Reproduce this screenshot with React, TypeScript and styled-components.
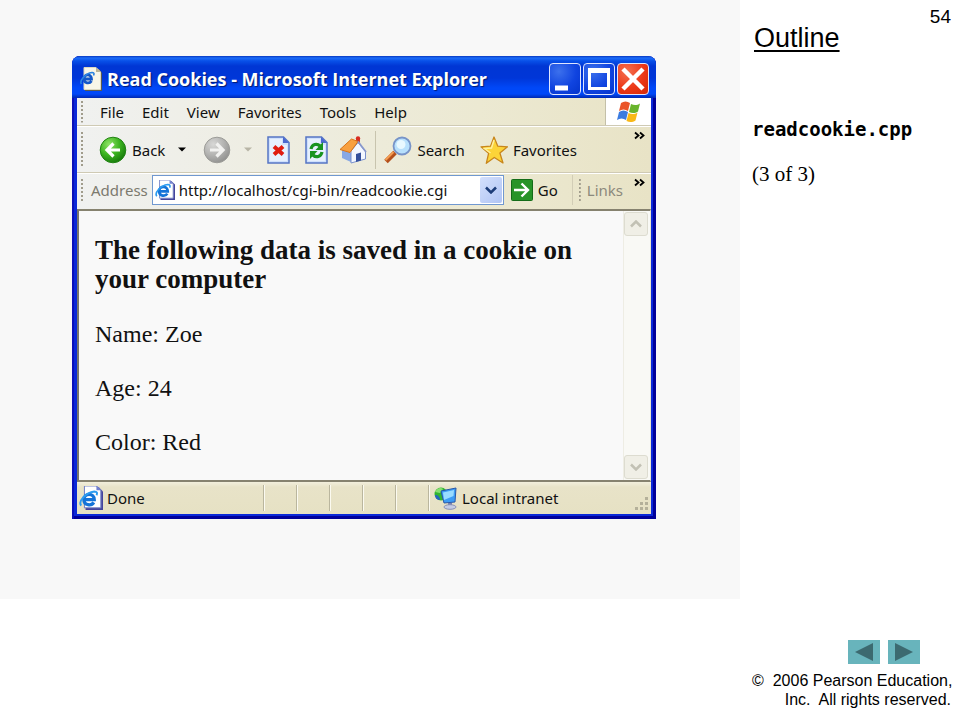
import React, { useId, useState } from "react";
import styled, { createGlobalStyle, css } from "styled-components";

const GlobalStyle = createGlobalStyle`
  * { box-sizing: border-box; }
  body { margin: 0; background: #fff; color: #000; }
  button { border: 0; padding: 0; margin: 0; background: none; font: inherit; color: inherit; }
  h1, h2, h3, p { margin: 0; }
  svg { display: block; flex: none; }
`;

const uiFont = `"Noto Sans", "Open Sans", sans-serif`;

const Page = styled.div`
  display: grid;
  grid-template-columns: minmax(0, 1fr) 220px;
  min-height: 100vh;
`;

const Slide = styled.main`
  align-self: start;
  padding: 56px 84px 80px 72px;
  background: #f8f8f8;
`;

const BrowserWindow = styled.section`
  display: flex;
  flex-direction: column;
  padding: 0 5px 5px;
  border-radius: 8px 8px 0 0;
  background: #0a28d8;
  box-shadow: inset 2px 0 #0a10b8, inset -3px -3px #00009a;
  color: #111;
  font: 15px/20px ${uiFont};
  overflow: hidden;
`;

const TitleBar = styled.header`
  display: flex;
  align-items: center;
  gap: 5px;
  height: 42px;
  margin: 0 -5px;
  padding: 4px 7px 0 8px;
  background: linear-gradient(#0838c0 0, #1c6cf8 2px, #0850e8 5px, #0036d4 10px, #0036d8 22px, #0048f8 32px, #0048f8 38px, #0028b0 42px);
`;

const WindowTitle = styled.h1`
  flex: 1;
  min-width: 0;
  color: #fff;
  font: bold 18px/24px "Open Sans", "Noto Sans", sans-serif;
  text-shadow: 1px 1px 1px #001a70;
  white-space: nowrap;
`;

const WindowControls = styled.div`
  display: flex;
  gap: 2px;
`;

const ControlButton = styled.button<{ $danger?: boolean }>`
  display: grid;
  place-items: center;
  width: 32px;
  height: 32px;
  border: 1px solid #dfe6ff;
  border-radius: 4px;
  background: ${(p) =>
    p.$danger
      ? "radial-gradient(circle at 30% 25%, #f47050, #ec3818 55%, #d42808)"
      : "radial-gradient(circle at 30% 25%, #3c70ec, #1044e0 55%, #0434cc)"};
`;

const bar = css`
  display: flex;
  align-items: center;
  background: linear-gradient(90deg, #f0f1f0, #ece9d2 70%, #e8e3c6);
`;

const MenuBar = styled.nav`
  ${bar}
  height: 28px;
  padding-left: 4px;
  border-bottom: 1px solid #cfcab4;
`;

const MenuList = styled.div`
  display: flex;
  flex: 1;
  gap: 18px;
  padding-left: 16px;
`;

const WindowsMark = styled.div`
  display: grid;
  place-items: center;
  align-self: stretch;
  width: 46px;
  border-left: 1px solid #c4c0a8;
  background: #fff;
`;

const ToolBar = styled.div`
  ${bar}
  height: 47px;
  padding: 0 6px 0 4px;
  border-top: 1px solid #fff;
  border-bottom: 1px solid #cfcab4;
`;

const AddressBar = styled.form`
  ${bar}
  height: 36px;
  padding: 0 6px 3px 4px;
  border-top: 1px solid #fff;
`;

const Grip = styled.span<{ $tall?: boolean }>`
  flex: none;
  width: 3px;
  height: ${(p) => (p.$tall ? 36 : 22)}px;
  background: repeating-linear-gradient(#a09c8c 0 2px, transparent 2px 4px);
  clip-path: inset(0 1px 0 0);
`;

const ToolButton = styled.button<{ $after?: number; $before?: number }>`
  display: flex;
  flex: none;
  align-items: center;
  gap: 5px;
  margin-left: ${(p) => p.$before ?? 0}px;
  margin-right: ${(p) => p.$after ?? 0}px;
  white-space: nowrap;
`;

const Separator = styled.span`
  width: 1px;
  height: 38px;
  margin: 0 8px;
  background: #c8c4ae;
`;

const More = styled.button`
  align-self: flex-start;
  flex: none;
  margin-left: auto;
  padding-top: 4px;
`;

const AddressLabel = styled.label`
  padding: 0 4px 0 7px;
  color: #7c7a6e;
`;

const AddressField = styled.div`
  display: flex;
  flex: 1;
  align-items: center;
  gap: 4px;
  min-width: 0;
  height: 30px;
  padding-left: 2px;
  border: 1px solid #7098d0;
  background: #fff;
`;

const AddressInput = styled.input`
  flex: 1;
  min-width: 0;
  padding: 0;
  border: 0;
  outline: 0;
  background: none;
  color: inherit;
  font: inherit;
`;

const DropButton = styled.button`
  display: grid;
  place-items: center;
  align-self: stretch;
  flex: none;
  width: 22px;
  margin: 1px;
  border-radius: 2px;
  background: linear-gradient(135deg, #d4e0fc, #b0c4f4);
`;

const LinksGroup = styled.div`
  display: flex;
  flex: none;
  align-items: center;
  gap: 5px;
  height: 30px;
  margin: 0 11px 0 14px;
  padding-left: 6px;
  border-left: 1px solid #d2cdb6;
  color: #8c897c;
`;

const Viewport = styled.div`
  display: flex;
  justify-content: space-between;
  min-height: 273px;
  border: 2px solid #86826f;
  border-left-color: #77756a;
  border-right: 1px solid #e8e4d0;
  background: #f9f9f9;
`;

const Document = styled.article`
  padding: 25px 16px 20px;
  font: 24px/28px "Liberation Serif", "Times New Roman", serif;
`;

const DocHeading = styled.h2`
  font-size: 27px;
  line-height: 29px;
`;

const DocLine = styled.p`
  margin-top: 26px;
`;

const ScrollBar = styled.div`
  display: flex;
  flex: none;
  flex-direction: column;
  justify-content: space-between;
  width: 27px;
  padding-right: 2px;
  border-left: 1px solid #eeede4;
  background: #f9f9f5;
`;

const ScrollButton = styled.button`
  display: grid;
  place-items: center;
  height: 24px;
  margin: 1px 0;
  border: 1px solid #dddcd0;
  border-radius: 3px;
  background: #f0efe6;
`;

const StatusBar = styled.footer`
  display: flex;
  align-items: center;
  height: 32px;
  background: linear-gradient(#f2efdc, #e8e3c8 5px, #e6e1c4);
`;

const StatusCell = styled.div<{ $grow?: boolean; $wide?: boolean }>`
  display: flex;
  flex: ${(p) => (p.$grow ? "1" : "none")};
  align-items: center;
  gap: ${(p) => (p.$grow ? 4 : 5)}px;
  width: ${(p) => (p.$wide ? 223 : 33)}px;
  height: 26px;
  padding-left: ${(p) => (p.$grow ? 2 : 5)}px;
  border-left: ${(p) => (p.$grow ? 0 : 1)}px solid #bab69e;
  box-shadow: ${(p) => (p.$grow ? "none" : "inset 1px 0 #fbfaf0")};
  white-space: nowrap;
`;

const SizeGrip = styled.span`
  align-self: flex-end;
  margin: 0 2px 0 auto;
`;

const Sidebar = styled.aside`
  display: flex;
  flex-direction: column;
  padding: 7px 9px 11px 12px;
  font-family: "Liberation Sans", Arial, sans-serif;
`;

const PageNumber = styled.div`
  align-self: flex-end;
  font-size: 19px;
  line-height: 20px;
`;

const OutlineLink = styled.a`
  align-self: flex-start;
  margin: -4px 0 0 2px;
  color: #000;
  font-size: 27px;
  line-height: 30px;
  text-decoration: underline;
  text-decoration-thickness: 2px;
  text-underline-offset: 3px;
`;

const FileName = styled.h2`
  margin-top: 65px;
  font: bold 19px/22px "DejaVu Sans Mono", monospace;
`;

const Part = styled.p`
  margin-top: 21px;
  font: 21px/26px "Liberation Serif", serif;
`;

const Pager = styled.nav`
  display: flex;
  justify-content: flex-end;
  gap: 8px;
  margin: auto 31px 7px 0;
`;

const PagerButton = styled.button`
  display: grid;
  place-items: center;
  width: 32px;
  height: 24px;
  background: #68b4bc;
`;

const Copyright = styled.p`
  font-size: 16px;
  line-height: 19px;
  text-align: right;
  white-space: pre;
`;

function IePage({ size = 22 }: { size?: number }) {
  return (
    <svg width={size} height={size} viewBox="0 0 22 22" aria-hidden="true">
      <path d="M6 1h12l4 4v17H6z" fill="#44449c" />
      <path d="M5 0h11l4 4v16H5z" fill="#fff" stroke="#7a88c8" />
      <path d="M16 0v4h4z" fill="#6f7fd0" />
      <path d="M4.500 12.500h9.500c0-6.500-9.500-6.500-9.500 0 0 5.500 7 6 9 2.500" fill="none" stroke="#1474d8" strokeWidth="3" />
      <path d="M2 18C-1 14 6 6 14 5c2.500 0 3 1.500 2 3.500" fill="none" stroke="#2c9cf0" strokeWidth="1.800" />
    </svg>
  );
}

function TitlePage() {
  return (
    <svg width="22" height="24" viewBox="0 0 22 24" aria-hidden="true">
      <path d="M5 2h14l3 4v18H5z" fill="#5a5a50" />
      <path d="M4 .5h12l4.500 4.500v17.500H4z" fill="#f8f6e8" stroke="#dcd8c0" />
      <path d="M16 .5V5h4.500z" fill="#b8b498" />
      <path d="M4 12h7.500c0-5.500-7.500-5.500-7.500 0 0 4.500 5.500 5 7.500 2" fill="none" stroke="#1458c8" strokeWidth="2.800" />
      <path d="M1.500 17C-1 14 5 6.500 12 5.500c2 0 2.500 1 1.500 3" fill="none" stroke="#2c84e0" strokeWidth="1.600" />
    </svg>
  );
}

function WindowGlyph({ kind }: { kind: "min" | "max" | "close" }) {
  return (
    <svg width="28" height="28" viewBox="0 0 28 28" fill="none" stroke="#fff" aria-hidden="true">
      {kind === "min" && <path d="M4 23h13" strokeWidth="5" />}
      {kind === "max" && (
        <>
          <path d="M3 5.500h22" strokeWidth="5" />
          <path d="M4.500 6v17.500h19V6" strokeWidth="3" />
        </>
      )}
      {kind === "close" && <path d="M4 4l20 20M24 4L4 24" strokeWidth="4.500" />}
    </svg>
  );
}

function WindowsFlag() {
  return (
    <svg width="26" height="24" viewBox="0 0 26 24" aria-hidden="true">
      <path d="M5 3c3-2 6-2 9 0l-2 8c-3-2-6-2-9 0z" fill="#ea5428" />
      <path d="M15 4c3 1.500 6 1.500 9-.5l-2 8c-3 2-6 2-9 .5z" fill="#68b42c" />
      <path d="M3 12c3-2 6-2 9 0l-2 8c-3-2-6-2-9 0z" fill="#3c7ce0" />
      <path d="M12.500 13c3 1.500 6 1.500 9-.5l-2 8c-3 2-6 2-9 .5z" fill="#f8b818" />
    </svg>
  );
}

function RoundArrow({ forward }: { forward?: boolean }) {
  const id = useId();
  return (
    <svg width="28" height="28" viewBox="0 0 28 28" aria-hidden="true">
      <defs>
        <radialGradient id={id} cx="35%" cy="28%" r="75%">
          <stop offset="0" stopColor={forward ? "#d8d8d6" : "#90e468"} />
          <stop offset=".55" stopColor={forward ? "#b4b4b2" : "#3cb420"} />
          <stop offset="1" stopColor={forward ? "#929290" : "#187c0c"} />
        </radialGradient>
      </defs>
      <circle cx="14" cy="14" r="12.800" fill={`url(#${id})`} stroke={forward ? "#9c9c98" : "#228414"} />
      <path
        d={forward ? "M7 14h13M13.500 7.500l6.500 6.500-6.500 6.500" : "M21 14H8M14.500 7.500L8 14l6.500 6.500"}
        fill="none"
        stroke={forward ? "#f2f2f0" : "#fff"}
        strokeWidth="3.200"
      />
    </svg>
  );
}

function Caret({ color = "#000" }: { color?: string }) {
  return (
    <svg width="8" height="5" viewBox="0 0 8 5" aria-hidden="true">
      <path d="M0 .5h8l-4 4z" fill={color} />
    </svg>
  );
}

function PageIcon({ kind }: { kind: "stop" | "refresh" }) {
  return (
    <svg width="23" height="28" viewBox="0 0 23 28" aria-hidden="true">
      <path d="M1 1h15.500L22 6.500V27H1z" fill="#cfe0fc" stroke="#5574c4" strokeWidth="1.500" />
      <path d="M3 3h12v6h5v16H3z" fill="#f0f6ff" opacity=".7" />
      <path d="M16 1v6h6z" fill="#4a68d0" />
      {kind === "stop" ? (
        <path d="M7 10.500l9 8M16 10.500l-9 8" stroke="#e01c10" strokeWidth="4" />
      ) : (
        <>
          <path d="M6 13c1-5 6-6 9-3" fill="none" stroke="#189420" strokeWidth="3.200" />
          <path d="M18 6v8h-7.500z" fill="#189420" />
          <path d="M17 16c-1 5-6 6-9 3" fill="none" stroke="#189420" strokeWidth="3.200" />
          <path d="M5 23v-8h7.500z" fill="#189420" />
        </>
      )}
    </svg>
  );
}

function HomeIcon() {
  return (
    <svg width="28" height="28" viewBox="0 0 28 28" aria-hidden="true">
      <path d="M17 2h4v8h-4z" fill="#c8442c" />
      <circle cx="19" cy="2.500" r="2.200" fill="#d82c20" />
      <path d="M3 14l10 3v9.500L3 22z" fill="#88a8e4" />
      <path d="M12 15l7-8.500 7.500 9v7.500L12 27z" fill="#f3f7ff" stroke="#7890cc" />
      <path d="M17 18l5-1.500v8L17 26z" fill="#34509c" />
      <path d="M1 13.500L12.500 3l6.500 2.500-8 11z" fill="#f8a040" stroke="#d87418" />
      <path d="M19 5.500l8 10.500" stroke="#8898cc" strokeWidth="1.800" />
    </svg>
  );
}

function SearchIcon() {
  return (
    <svg width="28" height="28" viewBox="0 0 28 28" aria-hidden="true">
      <path d="M2 25.500l9-9" stroke="#b4501c" strokeWidth="5" />
      <path d="M1.500 24l8-8" stroke="#f49c50" strokeWidth="2" />
      <circle cx="18" cy="10" r="8.500" fill="#b8e0fc" stroke="#7894c8" strokeWidth="1.800" />
      <circle cx="17" cy="8.500" r="4.500" fill="#e8f8ff" />
    </svg>
  );
}

function StarIcon() {
  return (
    <svg width="28" height="28" viewBox="0 0 28 28" aria-hidden="true">
      <path d="M14 1l3.800 9.200 9.700.6-7.600 6.200 3.100 10-8.700-5.500-8 5.800 2.300-10L1 10.800l9.500-.6z" fill="#fcd438" stroke="#c8861c" strokeWidth="1.300" strokeLinejoin="round" />
      <path d="M14 4l-2.500 8-7 .5 6 4.500" fill="none" stroke="#fff09c" strokeWidth="1.500" />
    </svg>
  );
}

function GoIcon() {
  return (
    <svg width="22" height="22" viewBox="0 0 22 22" aria-hidden="true">
      <rect x=".5" y=".5" width="21" height="21" rx="1" fill="#289428" stroke="#146c18" />
      <path d="M3 11h14M10.500 4.500L17 11l-6.500 6.500" fill="none" stroke="#fff" strokeWidth="2.400" />
    </svg>
  );
}

function MoreIcon() {
  return (
    <svg width="11" height="9" viewBox="0 0 11 9" aria-hidden="true">
      <path d="M1 1.500l3.500 3L1 7.500M6 1.500l3.500 3-3.500 3" fill="none" stroke="#000" strokeWidth="1.800" />
    </svg>
  );
}

function Chevron({ up, color }: { up?: boolean; color: string }) {
  return (
    <svg width="12" height="8" viewBox="0 0 12 8" aria-hidden="true">
      <path d={up ? "M1 6.500l5-5 5 5" : "M1 1.500l5 5 5-5"} fill="none" stroke={color} strokeWidth="2.500" />
    </svg>
  );
}

function NetworkIcon() {
  return (
    <svg width="23" height="23" viewBox="0 0 23 23" aria-hidden="true">
      <circle cx="7" cy="7" r="6.500" fill="#30b430" />
      <path d="M1 5c2-4 6-5 8-3L6 6z" fill="#88e070" />
      <path d="M1 8c3 0 5 2 5 5-3 0-5-2-5-5z" fill="#2464c0" />
      <path d="M7 4l15-3-1 14-11 1z" fill="#3c9cf4" stroke="#2858a8" />
      <path d="M9 5.500l11-2.500-.5 6L10 13z" fill="#98dcff" />
      <path d="M14 16h4v3h-4z" fill="#7880b0" />
      <ellipse cx="16" cy="20" rx="6" ry="2.300" fill="#c4cce4" stroke="#8890b4" />
    </svg>
  );
}

const dots = [[12, 2], [7, 7], [12, 7], [2, 12], [7, 12], [12, 12]];

const menus = ["File", "Edit", "View", "Favorites", "Tools", "Help"];
const cookieLines = ["Name: Zoe", "Age: 24", "Color: Red"];

export default function App() {
  const [address, setAddress] = useState("http://localhost/cgi-bin/readcookie.cgi");
  return (
    <>
      <GlobalStyle />
      <Page>
        <Slide>
          <BrowserWindow>
            <TitleBar>
              <TitlePage />
              <WindowTitle>Read Cookies - Microsoft Internet Explorer</WindowTitle>
              <WindowControls>
                <ControlButton aria-label="Minimize"><WindowGlyph kind="min" /></ControlButton>
                <ControlButton aria-label="Maximize"><WindowGlyph kind="max" /></ControlButton>
                <ControlButton $danger aria-label="Close"><WindowGlyph kind="close" /></ControlButton>
              </WindowControls>
            </TitleBar>
            <MenuBar>
              <Grip />
              <MenuList>
                {menus.map((name) => <button key={name}>{name}</button>)}
              </MenuList>
              <WindowsMark><WindowsFlag /></WindowsMark>
            </MenuBar>
            <ToolBar>
              <Grip $tall />
              <ToolButton $before={15} $after={13}><RoundArrow />Back</ToolButton>
              <ToolButton $after={17} aria-label="Back history"><Caret /></ToolButton>
              <ToolButton $after={13} aria-label="Forward"><RoundArrow forward /></ToolButton>
              <ToolButton $after={15} aria-label="Forward history"><Caret color="#b8b5a6" /></ToolButton>
              <ToolButton $after={15} aria-label="Stop"><PageIcon kind="stop" /></ToolButton>
              <ToolButton $after={11} aria-label="Refresh"><PageIcon kind="refresh" /></ToolButton>
              <ToolButton aria-label="Home"><HomeIcon /></ToolButton>
              <Separator />
              <ToolButton $after={15}><SearchIcon />Search</ToolButton>
              <ToolButton><StarIcon />Favorites</ToolButton>
              <More aria-label="More tools"><MoreIcon /></More>
            </ToolBar>
            <AddressBar onSubmit={(e) => e.preventDefault()}>
              <Grip />
              <AddressLabel htmlFor="address">Address</AddressLabel>
              <AddressField>
                <IePage size={20} />
                <AddressInput id="address" value={address} onChange={(e) => setAddress(e.target.value)} />
                <DropButton type="button" aria-label="Show addresses"><Chevron color="#1c3c78" /></DropButton>
              </AddressField>
              <ToolButton type="submit" $before={7}><GoIcon />Go</ToolButton>
              <LinksGroup>
                <Grip />
                <span>Links</span>
              </LinksGroup>
              <More type="button" aria-label="More links"><MoreIcon /></More>
            </AddressBar>
            <Viewport>
              <Document>
                <DocHeading>The following data is saved in a cookie on your computer</DocHeading>
                {cookieLines.map((line) => <DocLine key={line}>{line}</DocLine>)}
              </Document>
              <ScrollBar>
                <ScrollButton aria-label="Scroll up"><Chevron up color="#c2c1b4" /></ScrollButton>
                <ScrollButton aria-label="Scroll down"><Chevron color="#c2c1b4" /></ScrollButton>
              </ScrollBar>
            </Viewport>
            <StatusBar>
              <StatusCell $grow><IePage size={24} />Done</StatusCell>
              <StatusCell /><StatusCell /><StatusCell /><StatusCell /><StatusCell />
              <StatusCell $wide>
                <NetworkIcon />Local intranet
                <SizeGrip>
                  <svg width="15" height="15" viewBox="0 0 15 15" aria-hidden="true">
                    {dots.map(([x, y]) => <rect key={`${x}-${y}`} x={x - 1} y={y - 1} width="3" height="3" fill="#b4b09a" />)}
                  </svg>
                </SizeGrip>
              </StatusCell>
            </StatusBar>
          </BrowserWindow>
        </Slide>
        <Sidebar>
          <PageNumber>54</PageNumber>
          <OutlineLink href="#outline">Outline</OutlineLink>
          <FileName>readcookie.cpp</FileName>
          <Part>(3 of 3)</Part>
          <Pager aria-label="Slides">
            <PagerButton aria-label="Previous slide">
              <svg width="18" height="18" viewBox="0 0 18 18"><path d="M18 0v18L0 9z" fill="#3c6a70" /></svg>
            </PagerButton>
            <PagerButton aria-label="Next slide">
              <svg width="18" height="18" viewBox="0 0 18 18"><path d="M0 0v18l18-9z" fill="#3c6a70" /></svg>
            </PagerButton>
          </Pager>
          <Copyright>{"©  2006 Pearson Education,\nInc.  All rights reserved."}</Copyright>
        </Sidebar>
      </Page>
    </>
  );
}
